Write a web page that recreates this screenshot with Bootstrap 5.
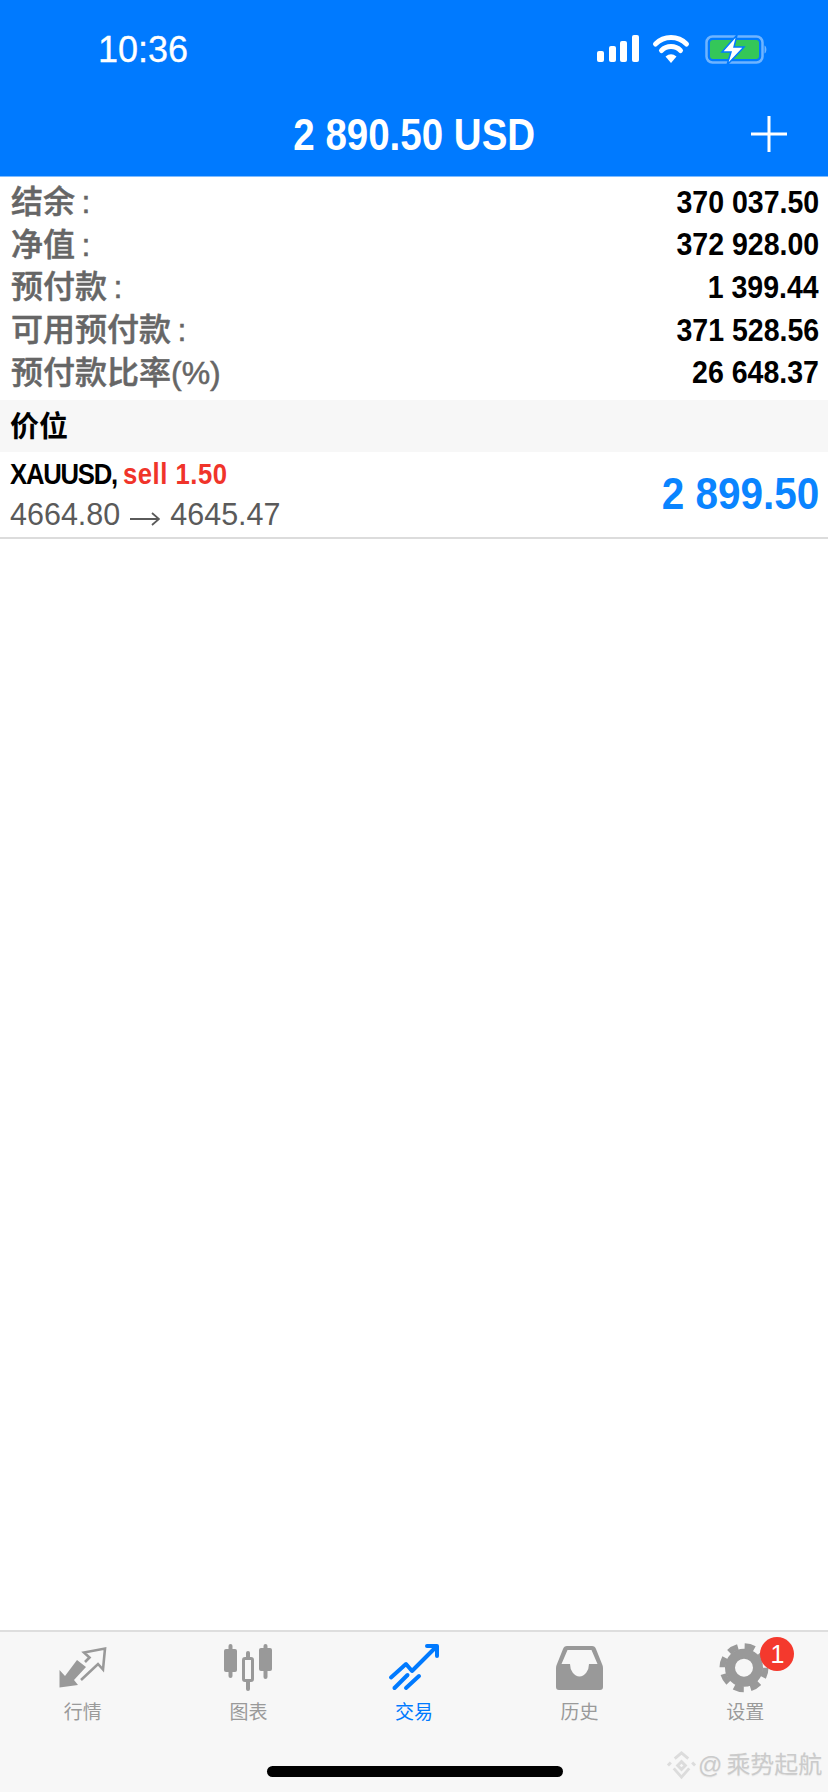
<!DOCTYPE html>
<html lang="zh">
<head>
  <meta charset="UTF-8" />
  <meta name="viewport" content="width=device-width, initial-scale=1.0"/>
  <title>交易</title>
  <link href="https://cdn.jsdelivr.net/npm/bootstrap@5.3.0/dist/css/bootstrap.min.css" rel="stylesheet" />
  <style>
    body { font-family: "Liberation Sans", "Noto Sans CJK SC", sans-serif; background: #fff; color: #000; }
    .app-top { background: #007aff; border-bottom: 1px solid #7fbcff; color: #fff; }
    .status-row { height: 98px; padding: 2px 61px 0 98px; }
    .clock-text { font-size: 36px; line-height: 1; -webkit-text-stroke: .3px #fff; }
    .title-row { height: 74px; margin-bottom: 4px; position: relative; }
    .title-text { font-size: 44px; font-weight: 700; line-height: 1; transform: scaleX(.875); white-space: nowrap; }
    .plus-btn { position: absolute; right: 40px; top: 18px; line-height: 0; }
    .summary-list { padding: 4px 9px 6px 11px; }
    .sum-row { height: 42.6px; }
    .sum-label { font-size: 32px; font-weight: 500; color: #666; line-height: 1; -webkit-text-stroke: .5px #666; }
    .sum-value { font-size: 31px; font-weight: 700; line-height: 1; transform: scaleX(.92); transform-origin: right center; white-space: nowrap; }
    .section-head { height: 52px; background: #f7f7f7; padding: 4px 10px 0; font-size: 29px; font-weight: 700; }
    .pos-row { height: 87px; padding: 0 9px 0 10px; border-bottom: 2px solid #dcdcdc; }
    .pos-main { font-size: 29.5px; font-weight: 700; line-height: 40px; transform: scaleX(.87); transform-origin: left center; white-space: nowrap; }
    .pos-symbol { letter-spacing: -1.4px; }
    .pos-side { color: #f0342a; letter-spacing: .6px; }
    .pos-price-line { font-size: 30.5px; color: #5a5a5a; line-height: 40px; white-space: nowrap; }
    .pos-price-line svg { margin: 0 10px; vertical-align: -1px; }
    .pos-profit { font-size: 44px; font-weight: 700; color: #0a84ff; line-height: 1; transform: scaleX(.92); transform-origin: right center; white-space: nowrap; }
    .tab-bar { height: 162px; background: #f7f7f7; border-top: 2px solid #dedede; position: relative; }
    .tab-item { width: 20%; padding-top: 8px; position: relative; color: #9a9a9a; font-size: 19px; line-height: 26px; }
    .tab-item.is-on { color: #007aff; }
    .tab-item svg { display: block; margin: 0 auto; }
    .tab-badge { position: absolute; left: 98px; top: 5px; width: 34px; height: 34px; background: #f4392d; color: #fff; font-size: 25px; line-height: 34px; border-radius: 50%; }
    .home-bar { position: absolute; left: 267px; top: 134px; width: 296px; height: 11px; background: #000; border-radius: 6px; }
    .water-mark { position: absolute; left: 666px; top: 117px; color: #cbcbcb; font-size: 24px; line-height: 32px; text-shadow: 0 1px 1px #e8e8e8; white-space: nowrap; }
    .water-mark svg { display: inline-block; }
    .mark-at { margin: 0 4px 0 1px; }
  </style>
</head>
<body>
<div class="d-flex flex-column min-vh-100">

  <header class="app-top">
    <div class="status-row d-flex justify-content-between align-items-center">
      <span class="clock-text">10:36</span>
      <svg width="170" height="30" viewBox="0 0 170 30">
        <g fill="#fff">
          <rect x="0" y="16" width="7" height="11" rx="2"/>
          <rect x="12" y="11" width="7" height="16" rx="2"/>
          <rect x="23" y="6" width="7" height="21" rx="2"/>
          <rect x="35" y="0" width="7" height="27" rx="2"/>
          <path d="M68.500 21.500 Q74 17 79.500 21.500 L74 28 Z"/>
        </g>
        <g fill="none" stroke="#fff" stroke-width="5" stroke-linecap="round">
          <path d="M58.500 9 A22 22 0 0 1 89.500 9"/>
          <path d="M64.500 15.500 A13.500 13.500 0 0 1 83.500 15.500"/>
        </g>
        <rect x="109.500" y="1.500" width="56" height="26" rx="6" fill="none" stroke="#6fb4ff" stroke-width="2.500"/>
        <path d="M167.500 10.500 C170 11.500 170 17.500 167.500 18.500 Z" fill="#6fb4ff"/>
        <rect x="113" y="5" width="49" height="19" rx="3" fill="#34c759"/>
        <path d="M140 0 L125 17 L134 17 L130 30 L147 12 L137 12 Z" fill="#fff" stroke="#007aff" stroke-width="1.500"/>
      </svg>
    </div>
    <div class="title-row d-flex justify-content-center align-items-center">
      <span class="title-text">2 890.50 USD</span>
      <span class="plus-btn">
        <svg width="38" height="36" viewBox="0 0 38 36"><path d="M19 0 V36 M1 18 H37" stroke="#fff" stroke-width="3" fill="none"/></svg>
      </span>
    </div>
  </header>

  <main class="flex-grow-1">
    <div class="summary-list">
      <div class="sum-row d-flex justify-content-between align-items-center">
        <span class="sum-label">结余&#8201;:</span><span class="sum-value">370 037.50</span>
      </div>
      <div class="sum-row d-flex justify-content-between align-items-center">
        <span class="sum-label">净值&#8201;:</span><span class="sum-value">372 928.00</span>
      </div>
      <div class="sum-row d-flex justify-content-between align-items-center">
        <span class="sum-label">预付款&#8201;:</span><span class="sum-value">1 399.44</span>
      </div>
      <div class="sum-row d-flex justify-content-between align-items-center">
        <span class="sum-label">可用预付款&#8201;:</span><span class="sum-value">371 528.56</span>
      </div>
      <div class="sum-row d-flex justify-content-between align-items-center">
        <span class="sum-label">预付款比率(%)</span><span class="sum-value">26 648.37</span>
      </div>
    </div>
    <div class="section-head d-flex align-items-center">价位</div>
    <div class="pos-row d-flex justify-content-between align-items-center">
      <div>
        <div class="pos-main"><span class="pos-symbol">XAUUSD, </span><span class="pos-side">sell 1.50</span></div>
        <div class="pos-price-line">4664.80<svg width="30" height="14" viewBox="0 0 30 14"><path d="M0 7 H29 M22 1 L29 7 L22 13" fill="none" stroke="#5a5a5a" stroke-width="1.800"/></svg>4645.47</div>
      </div>
      <span class="pos-profit">2 899.50</span>
    </div>
  </main>

  <nav class="tab-bar d-flex text-center">
    <div class="tab-item">
      <svg width="66" height="60" viewBox="0 0 66 60">
        <path d="M9.500 47.500 V30 L15 36 L27 20 L36 27 L24 40 L28 45 Z" fill="#999"/>
        <path d="M35 22 L39.500 17.500 L34 12.500 L55 8.500 L53 29.500 L48 24 L31 40" fill="none" stroke="#999" stroke-width="2.600"/>
      </svg>
      <div>行情</div>
    </div>
    <div class="tab-item">
      <svg width="66" height="60" viewBox="0 0 66 60">
        <g fill="#999">
          <rect x="9" y="9" width="13" height="23" rx="2"/><rect x="13.500" y="4" width="4" height="34" rx="2"/>
          <rect x="44" y="8" width="13" height="23" rx="2"/><rect x="48.500" y="4" width="4" height="35" rx="2"/>
          <rect x="31" y="11" width="4" height="40" rx="2"/>
        </g>
        <rect x="28.500" y="18.500" width="9" height="22" rx="1.500" fill="#f7f7f7" stroke="#999" stroke-width="3"/>
      </svg>
      <div>图表</div>
    </div>
    <div class="tab-item is-on">
      <svg width="66" height="60" viewBox="0 0 66 60">
        <g fill="none" stroke="#007aff" stroke-width="4" stroke-linecap="round" stroke-linejoin="round">
          <path d="M10 37.500 L25 24 L31 31 L54 8"/>
          <path d="M46 6 H56 V16"/>
          <path d="M13.500 48 L26.500 35"/>
          <path d="M25 48 L38 36"/>
        </g>
      </svg>
      <div>交易</div>
    </div>
    <div class="tab-item">
      <svg width="66" height="60" viewBox="0 0 66 60">
        <path d="M20 6 H45 Q48 6 49 9 L55 24 Q56 26 56 28 V47 Q56 50 53 50 H12 Q9 50 9 47 V28 Q9 26 10 24 L16 9 Q17 6 20 6 Z" fill="#999"/>
        <path d="M20.500 10 H44.500 L50.500 24 H42 A9.500 12.500 0 0 1 23 24 H14.500 Z" fill="#f7f7f7"/>
      </svg>
      <div>历史</div>
    </div>
    <div class="tab-item">
      <svg width="66" height="60" viewBox="0 0 66 60">
        <circle cx="32" cy="27.700" r="14" fill="none" stroke="#999" stroke-width="10"/>
        <circle cx="32" cy="27.700" r="21.500" fill="none" stroke="#999" stroke-width="6" stroke-dasharray="10 6.890"/>
      </svg>
      <div>设置</div>
      <span class="tab-badge">1</span>
    </div>

    <div class="home-bar"></div>
    <div class="water-mark d-flex align-items-center">
      <svg width="31" height="31" viewBox="0 0 32 32">
        <g fill="none" stroke="#dcdcdc" stroke-width="3">
          <path d="M9 9 L16 3 L23 9"/>
          <path d="M2 16 L5 13 M27 13 L30 16"/>
          <path d="M12 16 L16 12 L20 16 L16 20 Z"/>
          <path d="M8 19 L16 28 L24 19"/>
        </g>
      </svg>
      <span class="mark-at">@</span>
      <span>乘势起航</span>
    </div>
  </nav>

</div>
<script src="https://cdn.jsdelivr.net/npm/bootstrap@5.3.0/dist/js/bootstrap.bundle.min.js"></script>
</body>
</html>
